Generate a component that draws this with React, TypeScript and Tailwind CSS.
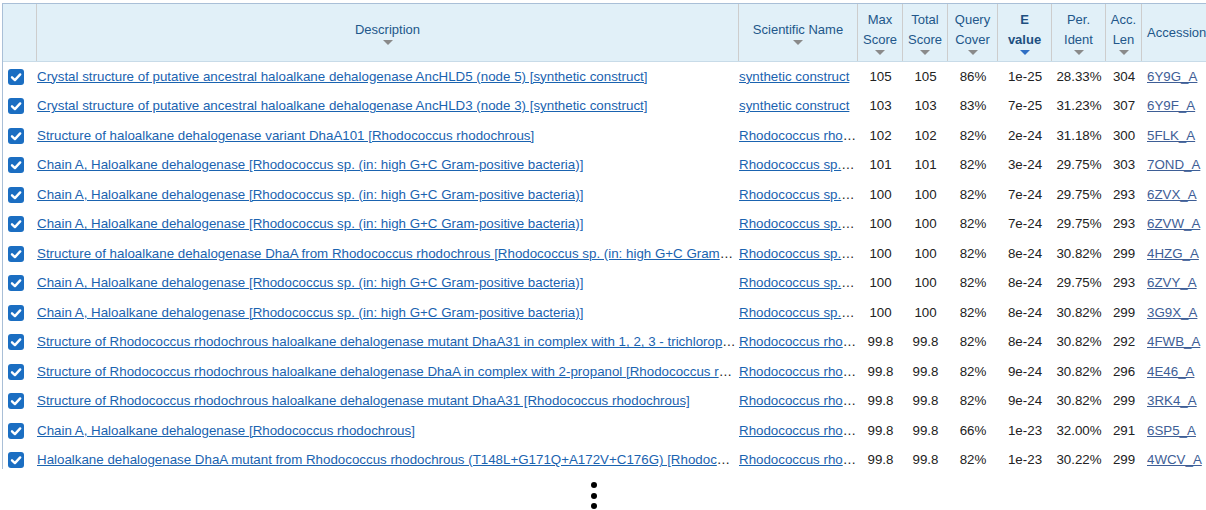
import React from 'react';

type Hit = {
  desc: string;
  sci: string;
  max: string;
  total: string;
  cover: string;
  evalue: string;
  ident: string;
  len: string;
  acc: string;
};

const RR = 'Rhodococcus rhodochrous';
const RSP = 'Rhodococcus sp. (in: high G+C Gram-positive bacteria)';
const CHAIN_SP = `Chain A, Haloalkane dehalogenase [${RSP}]`;

const hits: Hit[] = [
  { desc: 'Crystal structure of putative ancestral haloalkane dehalogenase AncHLD5 (node 5) [synthetic construct]', sci: 'synthetic construct', max: '105', total: '105', cover: '86%', evalue: '1e-25', ident: '28.33%', len: '304', acc: '6Y9G_A' },
  { desc: 'Crystal structure of putative ancestral haloalkane dehalogenase AncHLD3 (node 3) [synthetic construct]', sci: 'synthetic construct', max: '103', total: '103', cover: '83%', evalue: '7e-25', ident: '31.23%', len: '307', acc: '6Y9F_A' },
  { desc: `Structure of haloalkane dehalogenase variant DhaA101 [${RR}]`, sci: RR, max: '102', total: '102', cover: '82%', evalue: '2e-24', ident: '31.18%', len: '300', acc: '5FLK_A' },
  { desc: CHAIN_SP, sci: RSP, max: '101', total: '101', cover: '82%', evalue: '3e-24', ident: '29.75%', len: '303', acc: '7OND_A' },
  { desc: CHAIN_SP, sci: RSP, max: '100', total: '100', cover: '82%', evalue: '7e-24', ident: '29.75%', len: '293', acc: '6ZVX_A' },
  { desc: CHAIN_SP, sci: RSP, max: '100', total: '100', cover: '82%', evalue: '7e-24', ident: '29.75%', len: '293', acc: '6ZVW_A' },
  { desc: `Structure of haloalkane dehalogenase DhaA from Rhodococcus rhodochrous [${RSP}]`, sci: RSP, max: '100', total: '100', cover: '82%', evalue: '8e-24', ident: '30.82%', len: '299', acc: '4HZG_A' },
  { desc: CHAIN_SP, sci: RSP, max: '100', total: '100', cover: '82%', evalue: '8e-24', ident: '29.75%', len: '293', acc: '6ZVY_A' },
  { desc: CHAIN_SP, sci: RSP, max: '100', total: '100', cover: '82%', evalue: '8e-24', ident: '30.82%', len: '299', acc: '3G9X_A' },
  { desc: `Structure of Rhodococcus rhodochrous haloalkane dehalogenase mutant DhaA31 in complex with 1, 2, 3 - trichloropropane [${RR}]`, sci: RR, max: '99.8', total: '99.8', cover: '82%', evalue: '8e-24', ident: '30.82%', len: '292', acc: '4FWB_A' },
  { desc: `Structure of Rhodococcus rhodochrous haloalkane dehalogenase DhaA in complex with 2-propanol [${RR}]`, sci: RR, max: '99.8', total: '99.8', cover: '82%', evalue: '9e-24', ident: '30.82%', len: '296', acc: '4E46_A' },
  { desc: `Structure of Rhodococcus rhodochrous haloalkane dehalogenase mutant DhaA31 [${RR}]`, sci: RR, max: '99.8', total: '99.8', cover: '82%', evalue: '9e-24', ident: '30.82%', len: '299', acc: '3RK4_A' },
  { desc: `Chain A, Haloalkane dehalogenase [${RR}]`, sci: RR, max: '99.8', total: '99.8', cover: '66%', evalue: '1e-23', ident: '32.00%', len: '291', acc: '6SP5_A' },
  { desc: `Haloalkane dehalogenase DhaA mutant from Rhodococcus rhodochrous (T148L+G171Q+A172V+C176G) [${RR}]`, sci: RR, max: '99.8', total: '99.8', cover: '82%', evalue: '1e-23', ident: '30.22%', len: '299', acc: '4WCV_A' },
];

const COLS = 'grid grid-cols-[34px_702px_119px_45px_45px_50px_54px_54px_36px_100px]';

const SortArrow = ({ active }: { active?: boolean }) => (
  <span
    className={`block w-0 h-0 border-l-[5px] border-r-[5px] border-t-[5px] border-l-transparent border-r-transparent ${
      active ? 'border-t-[#2f6fc4]' : 'border-t-[#8a8a8a]'
    }`}
  />
);

const HeadCell = ({
  lines,
  sort = true,
  active,
  last,
}: {
  lines: string[];
  sort?: boolean;
  active?: boolean;
  last?: boolean;
}) => (
  <div
    className={`flex flex-col items-center justify-center ${last ? 'items-start pl-[5px]' : 'border-r border-[#cdcdcd]'}`}
  >
    {lines.map((l) => (
      <span
        key={l}
        className={`leading-[20px] whitespace-nowrap ${active ? 'font-bold text-[#1d4f80]' : 'text-[#22578a]'}`}
      >
        {l}
      </span>
    ))}
    {sort && <SortArrow active={active} />}
  </div>
);

const Checkbox = () => (
  <svg width="16" height="16" viewBox="0 0 16 16" className="shrink-0">
    <rect x="0" y="0" width="16" height="16" rx="3" fill="#1b6ec2" />
    <path d="M4 8.3 L6.9 11.1 L12.2 5.4" fill="none" stroke="#fff" strokeWidth="2.4" strokeLinecap="round" strokeLinejoin="round" />
  </svg>
);

const HitRow = ({ hit }: { hit: Hit }) => (
  <div className={`${COLS} h-[29.5px] items-center text-[13.33px] text-[#222]`}>
    <div className="pl-[5px] flex items-center">
      <Checkbox />
    </div>
    <div className="truncate pr-[2px]">
      <a href="#" className="text-[#1a63b0] underline">
        {hit.desc}
      </a>
    </div>
    <div className="truncate">
      <a href="#" className="text-[#1a63b0] underline">
        {hit.sci}
      </a>
    </div>
    <div className="text-center">{hit.max}</div>
    <div className="text-center">{hit.total}</div>
    <div className="text-center">{hit.cover}</div>
    <div className="text-center">{hit.evalue}</div>
    <div className="text-center">{hit.ident}</div>
    <div className="text-center">{hit.len}</div>
    <div className="pl-[5px]">
      <a href="#" className="text-[#3e5e96] underline">
        {hit.acc}
      </a>
    </div>
  </div>
);

export default function App() {
  return (
    <div className="w-[1206px] h-[510px] overflow-hidden bg-white text-[13px] font-['Liberation_Sans',Arial,sans-serif]">
      <div className="ml-[2px] mt-[3px] w-[1240px] h-[466px] border-l border-t border-[#a9bfd7]">
        <div className={`${COLS} h-[58px] bg-[#e1f0f8] border-b border-[#c8dbe8]`}>
          <div className="border-r border-[#cdcdcd]" />
          <HeadCell lines={['Description']} />
          <HeadCell lines={['Scientific Name']} />
          <HeadCell lines={['Max', 'Score']} />
          <HeadCell lines={['Total', 'Score']} />
          <HeadCell lines={['Query', 'Cover']} />
          <HeadCell lines={['E', 'value']} active />
          <HeadCell lines={['Per.', 'Ident']} />
          <HeadCell lines={['Acc.', 'Len']} />
          <HeadCell lines={['Accession']} sort={false} last />
        </div>
        <div>
          {hits.map((h) => (
            <HitRow key={h.acc} hit={h} />
          ))}
        </div>
      </div>
      <div className="ml-[591px] mt-[13px] flex flex-col gap-[4.5px] w-[6px]">
        <span className="block w-[6px] h-[6px] rounded-full bg-black" />
        <span className="block w-[6px] h-[6px] rounded-full bg-black" />
        <span className="block w-[6px] h-[6px] rounded-full bg-black" />
      </div>
    </div>
  );
}
